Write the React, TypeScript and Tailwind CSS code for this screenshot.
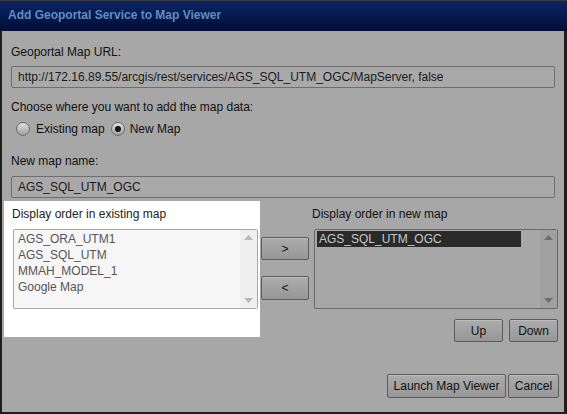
import React from 'react'

const font = { fontFamily: '"Liberation Sans", Arial, sans-serif' }

function Btn({ label, className = '' }: { label: string; className?: string }) {
  return (
    <button
      className={`flex items-center justify-center rounded-[2px] border border-[#5c5c5c] bg-gradient-to-b from-[#acacac] to-[#979797] text-[12px] text-[#111] shadow-[inset_0_1px_0_#bdbdbd] ${className}`}
    >
      {label}
    </button>
  )
}

function Radio({ checked }: { checked?: boolean }) {
  return (
    <span className="flex h-[14px] w-[14px] items-center justify-center rounded-full border border-[#6a6a6a] bg-gradient-to-b from-[#e2e2e2] to-[#9e9e9e]">
      {checked && <span className="h-[6px] w-[6px] rounded-full bg-[#111]" />}
    </span>
  )
}

function Arrow({ up, color }: { up?: boolean; color: string }) {
  return (
    <svg width="9" height="5" viewBox="0 0 9 5">
      <path d={up ? 'M0 5 L4.5 0 L9 5 Z' : 'M0 0 L4.5 5 L9 0 Z'} fill={color} />
    </svg>
  )
}

export default function App() {
  const existing = ['AGS_ORA_UTM1', 'AGS_SQL_UTM', 'MMAH_MODEL_1', 'Google Map']

  return (
    <div style={font} className="flex h-[414px] w-[567px] flex-col overflow-hidden bg-[#a7a7a7] text-[12px] text-[#111]">
      <div className="h-[31px] shrink-0 border-t border-[#3a3a3a] bg-gradient-to-b from-[#0b2566] to-[#030d38] pl-[8px] pt-[7px] text-[12px] font-bold leading-[15px] text-[#5e8fc0]">
        Add Geoportal Service to Map Viewer
      </div>

      <div className="flex flex-1 flex-col border-b-2 border-l-2 border-r-[3px] border-[#1e1e1e] px-[9px]">
        <div className="mt-[14px] leading-[14px]">Geoportal Map URL:</div>
        <div className="mt-[7px] flex h-[22px] w-[544px] items-center rounded-[2px] border border-[#6e6e6e] bg-[#a9a9a9] pl-[6px] text-[#1a1a1a]">
          http://172.16.89.55/arcgis/rest/services/AGS_SQL_UTM_OGC/MapServer, false
        </div>

        <div className="mt-[12px] leading-[14px]">Choose where you want to add the map data:</div>
        <div className="mt-[7px] flex h-[16px] items-center pl-[5px]">
          <Radio />
          <span className="ml-[6px]">Existing map</span>
          <span className="ml-[6px]">
            <Radio checked />
          </span>
          <span className="ml-[5px]">New Map</span>
        </div>

        <div className="mt-[17px] leading-[14px]">New map name:</div>
        <div className="mt-[8px] flex h-[22px] w-[544px] items-center rounded-[2px] border border-[#6e6e6e] bg-[#a9a9a9] pl-[6px] text-[#1a1a1a]">
          AGS_SQL_UTM_OGC
        </div>

        <div className="-ml-[7px] mt-[3px] flex items-start">
          <div className="h-[136px] w-[256px] shrink-0 bg-white pt-[6px]">
            <div className="pl-[8px] leading-[14px] text-[#222]">Display order in existing map</div>
            <div className="ml-[9px] mt-[8px] flex h-[80px] w-[245px] rounded-[2px] border border-[#a8a8a8] bg-[#f6f6f6]">
              <div className="flex-1 pl-[4px] pt-[1px] text-[#555]">
                {existing.map(item => (
                  <div key={item} className="leading-[16px]">{item}</div>
                ))}
              </div>
              <div className="flex w-[17px] flex-col items-center justify-between bg-[#efefef] py-[5px]">
                <Arrow up color="#b8b8b8" />
                <Arrow color="#b8b8b8" />
              </div>
            </div>
          </div>

          <div className="ml-[1px] mt-[36px] flex w-[48px] flex-col gap-[16px]">
            <Btn label=">" className="h-[23px] w-[48px]" />
            <Btn label="<" className="h-[24px] w-[48px]" />
          </div>

          <div className="ml-[5px] flex w-[244px] flex-col pt-[6px]">
            <div className="-ml-[2px] leading-[14px] text-[#111]">Display order in new map</div>
            <div className="mt-[8px] flex h-[80px] w-[244px] rounded-[2px] border border-[#6a6a6a] bg-[#a7a7a7]">
              <div className="flex-1 pl-[2px] pt-[1px]">
                <div className="w-[204px] bg-[#2a2a2a] pl-[2px] leading-[16px] text-[#c9c9c9]">AGS_SQL_UTM_OGC</div>
              </div>
              <div className="flex w-[17px] flex-col items-center justify-between bg-[#a0a0a0] py-[5px]">
                <Arrow up color="#6e6e6e" />
                <Arrow color="#6e6e6e" />
              </div>
            </div>
            <div className="mt-[10px] flex justify-end gap-[6px]">
              <Btn label="Up" className="h-[23px] w-[49px]" />
              <Btn label="Down" className="h-[23px] w-[49px]" />
            </div>
          </div>
        </div>

        <div className="mb-[14px] mt-auto flex w-[548px] justify-end gap-[2px]">
          <Btn label="Launch Map Viewer" className="h-[24px] w-[119px]" />
          <Btn label="Cancel" className="h-[24px] w-[51px]" />
        </div>
      </div>
    </div>
  )
}
